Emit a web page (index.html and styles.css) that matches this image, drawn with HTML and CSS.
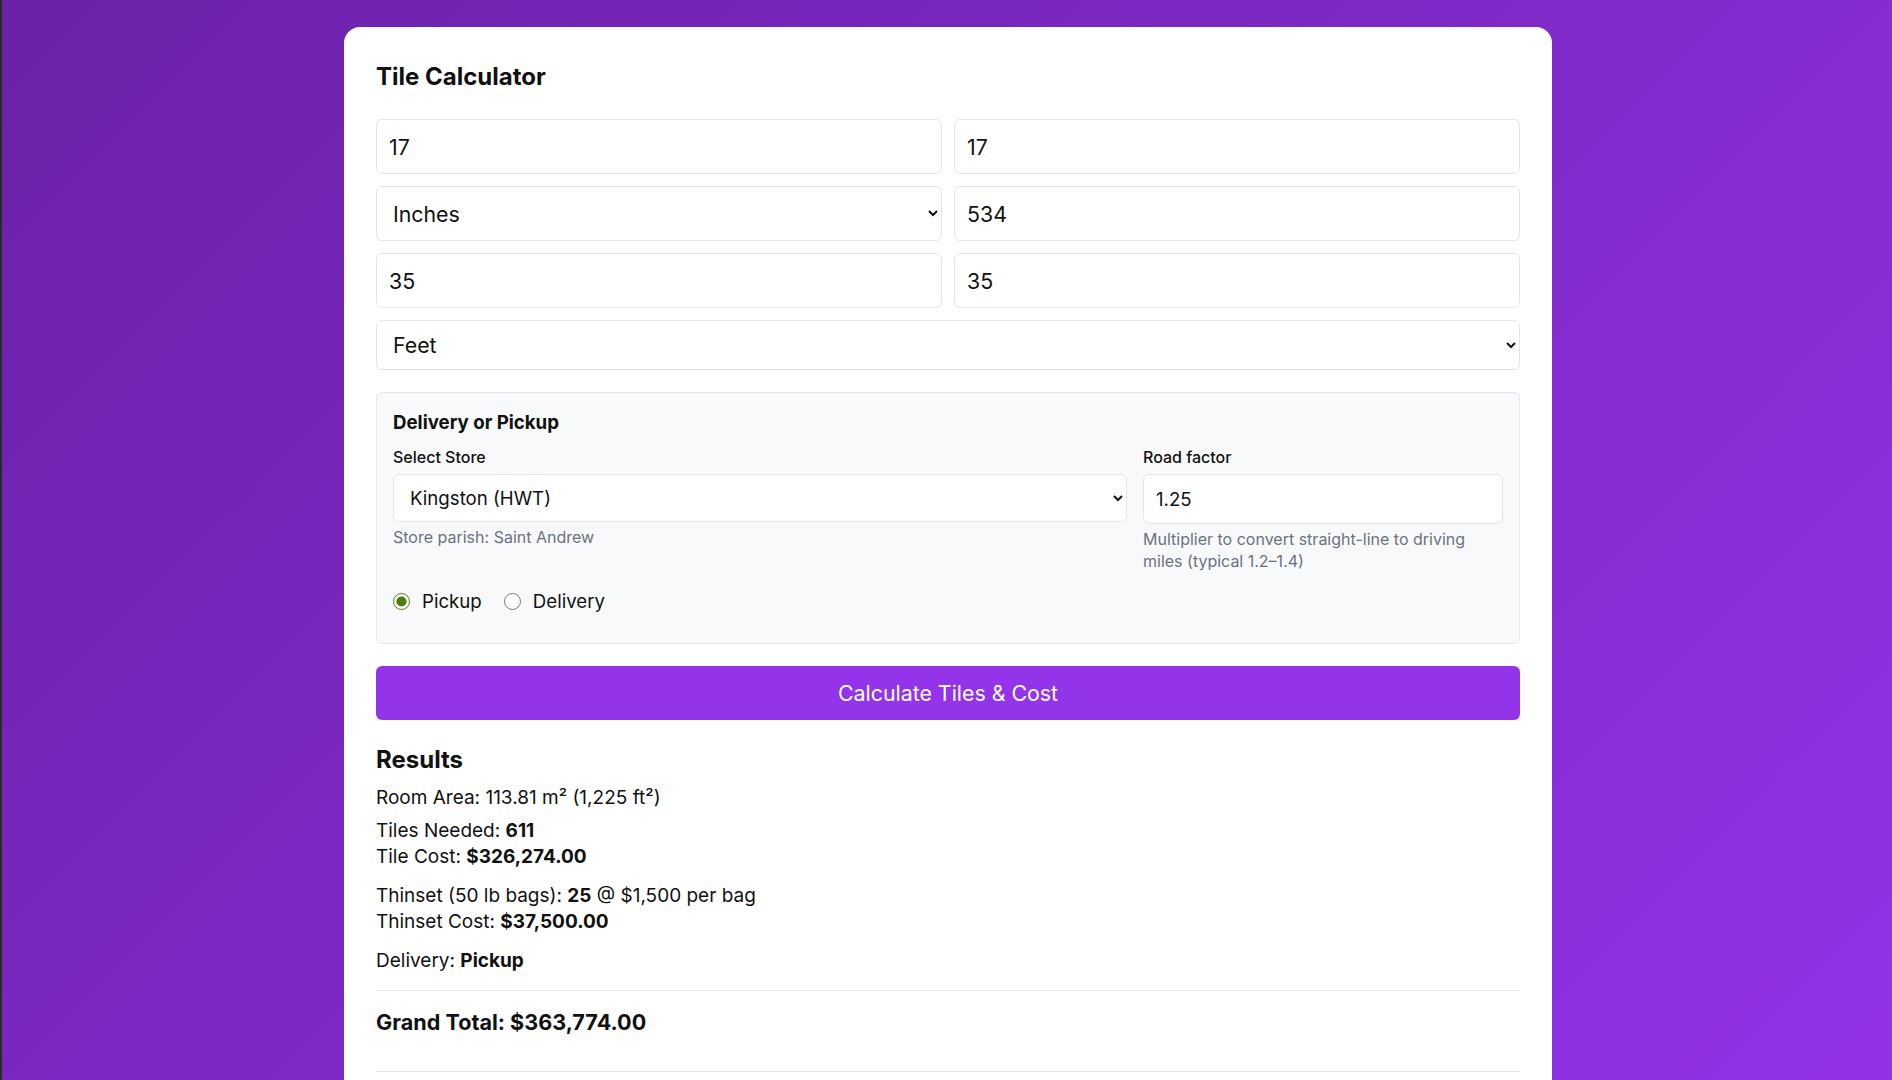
FILE: index.html
```html
<!DOCTYPE html>
<html lang="en">
<head>
<meta charset="utf-8">
<title>Tile Calculator</title>
<link rel="stylesheet" href="styles.css">
</head>
<body>
<main class="card">
  <h1 class="title">Tile Calculator</h1>
  <div class="dims">
    <input class="field" type="text" value="17">
    <input class="field" type="text" value="17">
    <select class="field sel"><option>Inches</option></select>
    <input class="field" type="text" value="534">
    <input class="field" type="text" value="35">
    <input class="field" type="text" value="35">
    <select class="field sel wide"><option>Feet</option></select>
  </div>

  <section class="delivery">
    <h3 class="delivery-title">Delivery or Pickup</h3>
    <div class="delivery-grid">
      <div class="col">
        <label class="lbl">Select Store</label>
        <select class="store"><option>Kingston (HWT)</option></select>
        <p class="hint">Store parish: Saint Andrew</p>
      </div>
      <div class="col">
        <label class="lbl">Road factor</label>
        <input class="road" type="text" value="1.25">
        <p class="hint">Multiplier to convert straight-line to driving miles (typical 1.2–1.4)</p>
      </div>
    </div>
    <div class="radios">
      <label class="radio"><input type="radio" name="mode" checked><span>Pickup</span></label>
      <label class="radio"><input type="radio" name="mode"><span>Delivery</span></label>
    </div>
  </section>

  <button class="calc" type="button">Calculate Tiles &amp; Cost</button>

  <section class="results">
    <h2 class="results-title">Results</h2>
    <p class="r-area">Room Area: 113.81 m² (1,225 ft²)</p>
    <div class="r-group">
      <div>Tiles Needed: <strong>611</strong></div>
      <div>Tile Cost: <strong>$326,274.00</strong></div>
    </div>
    <div class="r-group">
      <div>Thinset (50 lb bags): <strong>25</strong> @ $1,500 per bag</div>
      <div>Thinset Cost: <strong>$37,500.00</strong></div>
    </div>
    <div class="r-delivery">Delivery: <strong>Pickup</strong></div>
    <hr class="sep">
    <div class="grand">Grand Total: $363,774.00</div>
    <hr class="sep sep-last">
  </section>
</main>
</body>
</html>
```

FILE: styles.css
```css
html {
  background: linear-gradient(135deg, #6b21a8 0%, #9333ea 100%);
  min-height: 100%;
}

body {
  margin: 0;
  padding: 27px 0 40px 2px;
  border-left: 2px solid #2b2b2b;
  font-family: Inter, "Noto Sans", sans-serif;
  color: #111111;
  line-height: 1.5;
}

.card {
  box-sizing: border-box;
  width: 1208px;
  margin: 0 auto;
  background: #ffffff;
  border-radius: 16px;
  padding: 32px 32px 32px;
}

.title {
  margin: 0 0 24px;
  font-size: 24px;
  line-height: 36px;
  font-weight: 700;
}

.dims {
  display: grid;
  grid-template-columns: 1fr 1fr;
  gap: 12px;
}

.field {
  box-sizing: border-box;
  height: 55px;
  margin: 0;
  padding: 0 12px;
  border: 1px solid #e3e5e8;
  border-radius: 6px;
  background: #ffffff;
  font-family: Inter, sans-serif;
  font-size: 21.33px;
  color: #111111;
}

.wide {
  grid-column: 1 / span 2;
  height: 50px;
}

.delivery {
  margin-top: 22px;
  padding: 16px;
  background: #f8f9fa;
  border: 1px solid #e5e7eb;
  border-radius: 6px;
}

.delivery-title {
  margin: 0 0 10px;
  font-size: 18.67px;
  line-height: 27px;
  font-weight: 700;
}

.delivery-grid {
  display: grid;
  grid-template-columns: 1fr 360px;
  gap: 16px;
  align-items: start;
}

.col {
  display: flex;
  flex-direction: column;
}

.lbl {
  font-size: 16px;
  line-height: 22px;
  font-weight: 500;
  margin-bottom: 6px;
}

.store,
.road {
  box-sizing: border-box;
  margin: 0;
  padding: 0 12px;
  border: 1px solid #e3e5e8;
  border-radius: 6px;
  background: #ffffff;
  font-family: Inter, sans-serif;
  font-size: 18.67px;
  color: #111111;
}

.store {
  height: 48px;
}

.road {
  height: 50px;
}

.hint {
  margin: 5px 0 0;
  font-size: 16px;
  line-height: 21.7px;
  color: #6b7280;
}

.radios {
  display: flex;
  align-items: center;
  margin: 16px 0 12px;
  font-size: 18.67px;
  line-height: 27px;
}

.radio {
  display: flex;
  align-items: center;
  margin-right: 22px;
}

.radio input {
  width: 17px;
  height: 17px;
  margin: 0 12px 0 0;
  accent-color: #4d7c0f;
}

.calc {
  display: block;
  width: 100%;
  height: 54px;
  margin-top: 22px;
  border: 0;
  border-radius: 6px;
  background: #9333ea;
  color: #ffffff;
  font-family: Inter, sans-serif;
  font-size: 21.33px;
}

.results-title {
  margin: 22px 0 7px;
  font-size: 24px;
  line-height: 36px;
  font-weight: 700;
}

.results {
  font-size: 19px;
  line-height: 26.3px;
}

.r-area {
  margin: 0 0 6px;
}

.r-group {
  margin-bottom: 12.5px;
}

.sep {
  border: 0;
  border-top: 1px solid #e5e7eb;
  margin: 16px 0;
}

.grand {
  margin-top: 16px;
  font-size: 21.6px;
  line-height: 30px;
  font-weight: 700;
}

.sep-last {
  margin-top: 34px;
  margin-bottom: 40px;
}
```
